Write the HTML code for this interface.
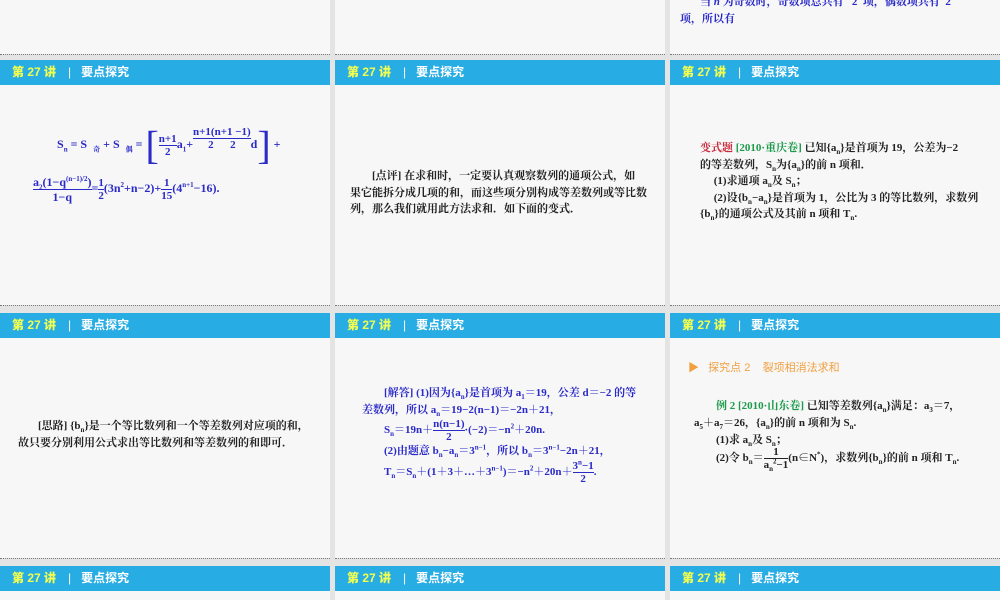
<!DOCTYPE html>
<html><head><meta charset="utf-8"><style>
body{margin:0;width:1000px;height:600px;background:#e4e4e4;position:relative;overflow:hidden;font-family:"Liberation Serif","Noto Serif CJK SC","Noto Sans CJK SC",serif;}
.s{position:absolute;background:#f7f7f7;}
.bl{position:absolute;height:3px;border-top:1px dotted #777;}
.h{position:absolute;height:25px;background:#27ace3;font-family:"Liberation Sans","Noto Sans CJK SC",sans-serif;font-size:12px;font-weight:bold;line-height:25px;color:#fff;white-space:nowrap}
.h b{color:#f2ff50;margin-left:12px}
.h i{font-style:normal;margin:0 10px 0 12px;font-weight:normal}
.t{position:absolute;font-size:11px;line-height:16px;font-weight:bold;white-space:nowrap}
.bu{color:#2a2ac8}
.k{color:#222}
sub,sup{font-size:7px;line-height:0}
.fr{display:inline-block;vertical-align:middle;text-align:center;line-height:12px;font-size:11px}
.fr span{display:block}
.fr span:first-child{border-bottom:1px solid currentColor}
</style></head><body>
<div class="s" style="left:0;top:0;width:330px;height:54px"></div>
<div class="s" style="left:335px;top:0;width:330px;height:54px"></div>
<div class="s" style="left:670px;top:0;width:330px;height:54px"></div>
<div class="t bu" style="left:700px;top:-6px">当 <i>n</i> 为奇数时，奇数项总共有 &nbsp;&nbsp;2&nbsp; 项，偶数项共有 &nbsp;2</div>
<div class="t bu" style="left:680px;top:11px">项，所以有</div>

<div class="h" style="left:0;top:60px;width:330px"><b>第 27 讲</b><i>|</i>要点探究</div>
<div class="h" style="left:335px;top:60px;width:330px"><b>第 27 讲</b><i>|</i>要点探究</div>
<div class="h" style="left:670px;top:60px;width:330px"><b>第 27 讲</b><i>|</i>要点探究</div>
<div class="s" style="left:0;top:85px;width:330px;height:220px"></div>
<div class="s" style="left:335px;top:85px;width:330px;height:220px"></div>
<div class="s" style="left:670px;top:85px;width:330px;height:220px"></div>

<div class="h" style="left:0;top:313px;width:330px"><b>第 27 讲</b><i>|</i>要点探究</div>
<div class="h" style="left:335px;top:313px;width:330px"><b>第 27 讲</b><i>|</i>要点探究</div>
<div class="h" style="left:670px;top:313px;width:330px"><b>第 27 讲</b><i>|</i>要点探究</div>
<div class="s" style="left:0;top:338px;width:330px;height:220px"></div>
<div class="s" style="left:335px;top:338px;width:330px;height:220px"></div>
<div class="s" style="left:670px;top:338px;width:330px;height:220px"></div>

<div class="h" style="left:0;top:566px;width:330px"><b>第 27 讲</b><i>|</i>要点探究</div>
<div class="h" style="left:335px;top:566px;width:330px"><b>第 27 讲</b><i>|</i>要点探究</div>
<div class="h" style="left:670px;top:566px;width:330px"><b>第 27 讲</b><i>|</i>要点探究</div>
<div class="s" style="left:0;top:591px;width:330px;height:9px"></div>
<div class="s" style="left:335px;top:591px;width:330px;height:9px"></div>
<div class="s" style="left:670px;top:591px;width:330px;height:9px"></div>

<div class="bl" style="left:0;top:54px;width:330px"></div><div class="bl" style="left:335px;top:54px;width:330px"></div><div class="bl" style="left:670px;top:54px;width:330px"></div>
<div class="bl" style="left:0;top:305px;width:330px"></div><div class="bl" style="left:335px;top:305px;width:330px"></div><div class="bl" style="left:670px;top:305px;width:330px"></div>
<div class="bl" style="left:0;top:558px;width:330px"></div><div class="bl" style="left:335px;top:558px;width:330px"></div><div class="bl" style="left:670px;top:558px;width:330px"></div>

<!-- slide 1 -->
<div class="t bu" style="left:57px;top:122px;font-size:12px;line-height:44px">S<sub>n</sub> = S &nbsp;<sub>奇</sub> + S &nbsp;<sub>偶</sub> = <span style="font-size:40px;font-weight:normal;vertical-align:middle">[</span><span class="fr"><span>n+1</span><span>2</span></span>a<sub>1</sub>+<span class="fr" style="margin-top:-14px"><span>n+1(n+1 −1)</span><span>2 &nbsp;&nbsp;&nbsp;&nbsp;&nbsp;2</span></span>d<span style="font-size:40px;font-weight:normal;vertical-align:middle">]</span> +</div>
<div class="t bu" style="left:33px;top:174px;font-size:12px;line-height:28px"><span class="fr" style="font-size:12px;line-height:14px"><span>a<sub>2</sub>(1−q<sup>(n−1)/2</sup>)</span><span>1−q</span></span>=<span class="fr"><span>1</span><span>2</span></span>(3n<sup>2</sup>+n−2)+<span class="fr"><span>1</span><span>15</span></span>(4<sup>n+1</sup>−16).</div>

<!-- slide 2 -->
<div class="t k" style="left:372px;top:168px;line-height:16.5px">[点评] 在求和时，一定要认真观察数列的通项公式，如<br><span style="margin-left:-22px">果它能拆分成几项的和，而这些项分别构成等差数列或等比数</span><br><span style="margin-left:-22px">列，那么我们就用此方法求和．如下面的变式．</span></div>

<!-- slide 3 -->
<div class="t k" style="left:700px;top:140px;line-height:16.5px"><span style="color:#c8283a">变式题</span> <span style="color:#1a9a4a">[2010·重庆卷]</span> 已知{a<sub>n</sub>}是首项为 19，公差为−2<br>的等差数列，S<sub>n</sub>为{a<sub>n</sub>}的前 n 项和．<br>&nbsp;&nbsp;&nbsp;&nbsp;&nbsp;(1)求通项 a<sub>n</sub>及 S<sub>n</sub>；<br>&nbsp;&nbsp;&nbsp;&nbsp;&nbsp;(2)设{b<sub>n</sub>−a<sub>n</sub>}是首项为 1，公比为 3 的等比数列，求数列<br>{b<sub>n</sub>}的通项公式及其前 n 项和 T<sub>n</sub>.</div>

<!-- slide 4 -->
<div class="t k" style="left:38px;top:418px;line-height:17px">[思路] {b<sub>n</sub>}是一个等比数列和一个等差数列对应项的和，<br><span style="margin-left:-20px">故只要分别利用公式求出等比数列和等差数列的和即可．</span></div>

<!-- slide 5 -->
<div class="t bu" style="left:384px;top:385px;line-height:17px">[解答] (1)因为{a<sub>n</sub>}是首项为 a<sub>1</sub>＝19，公差 d＝−2 的等<br><span style="margin-left:-22px">差数列，所以 a<sub>n</sub>＝19−2(n−1)＝−2n＋21，</span></div>
<div class="t bu" style="left:384px;top:418px;line-height:24px">S<sub>n</sub>＝19n＋<span class="fr"><span>n(n−1)</span><span>2</span></span>·(−2)＝−n<sup>2</sup>＋20n.</div>
<div class="t bu" style="left:384px;top:443px">(2)由题意 b<sub>n</sub>−a<sub>n</sub>＝3<sup>n−1</sup>，所以 b<sub>n</sub>＝3<sup>n−1</sup>−2n＋21，</div>
<div class="t bu" style="left:384px;top:460px;line-height:24px">T<sub>n</sub>＝S<sub>n</sub>＋(1＋3＋…＋3<sup>n−1</sup>)＝−n<sup>2</sup>＋20n＋<span class="fr"><span>3<sup>n</sup>−1</span><span>2</span></span>.</div>

<!-- slide 6 -->
<div class="t" style="left:688px;top:360px;color:#f0a040;font-family:'Liberation Sans','Noto Sans CJK SC',sans-serif;font-weight:normal">▶ &nbsp;&nbsp;探究点 2 &nbsp;&nbsp;&nbsp;裂项相消法求和</div>
<div class="t k" style="left:716px;top:398px;line-height:17px"><span style="color:#1a9a4a">例 2 [2010·山东卷]</span> 已知等差数列{a<sub>n</sub>}满足：a<sub>3</sub>＝7，<br><span style="margin-left:-22px">a<sub>5</sub>＋a<sub>7</sub>＝26，{a<sub>n</sub>}的前 n 项和为 S<sub>n</sub>.</span><br>(1)求 a<sub>n</sub>及 S<sub>n</sub>；</div>
<div class="t k" style="left:716px;top:446px;line-height:24px">(2)令 b<sub>n</sub>＝<span class="fr"><span>1</span><span>a<sub>n</sub><sup>2</sup>−1</span></span>(n∈N<sup>*</sup>)，求数列{b<sub>n</sub>}的前 n 项和 T<sub>n</sub>.</div>
</body></html>
